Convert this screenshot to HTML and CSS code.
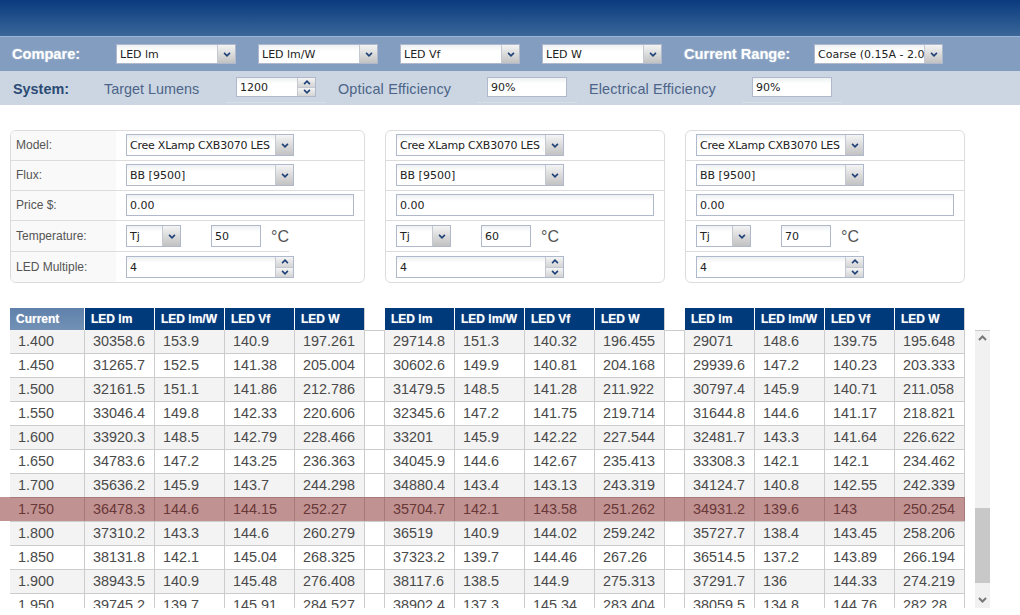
FILE: index.html
```html
<!DOCTYPE html>
<html lang="en">
<head>
<meta charset="utf-8">
<title>LED Compare</title>
<link rel="stylesheet" href="styles.css">
</head>
<body>
<svg class="defs" width="0" height="0" aria-hidden="true">
  <symbol id="down" viewBox="0 0 9 6"><path d="M1 1l3.5 3.5L8 1" fill="none" stroke="#1f4178" stroke-width="2"/></symbol>
  <symbol id="up" viewBox="0 0 9 6"><path d="M1 5l3.5-3.5L8 5" fill="none" stroke="#1f4178" stroke-width="2"/></symbol>
  <symbol id="sdown" viewBox="0 0 9 6"><path d="M1 1l3.5 3.5L8 1" fill="none" stroke="#777" stroke-width="2"/></symbol>
  <symbol id="sup" viewBox="0 0 9 6"><path d="M1 5l3.5-3.5L8 5" fill="none" stroke="#777" stroke-width="2"/></symbol>
</svg>

<header class="banner"></header>

<section class="compare">
  <span class="compare-label">Compare:</span>
  <div class="dd w120"><span class="dd-text">LED lm</span><span class="dd-btn"><svg class="chev"><use href="#down"/></svg></span></div>
  <div class="dd w120"><span class="dd-text">LED lm/W</span><span class="dd-btn"><svg class="chev"><use href="#down"/></svg></span></div>
  <div class="dd w120"><span class="dd-text">LED Vf</span><span class="dd-btn"><svg class="chev"><use href="#down"/></svg></span></div>
  <div class="dd w120"><span class="dd-text">LED W</span><span class="dd-btn"><svg class="chev"><use href="#down"/></svg></span></div>
  <span class="compare-label range">Current Range:</span>
  <div class="dd w129"><span class="dd-text">Coarse (0.15A - 2.0</span><span class="dd-btn"><svg class="chev"><use href="#down"/></svg></span></div>
</section>

<section class="system">
  <span class="system-title">System:</span>
  <span class="system-label l-target">Target Lumens</span>
  <div class="sys-cell"><div class="dd w80"><span class="dd-text">1200</span><span class="spin"><span><svg class="chev"><use href="#up"/></svg></span><span><svg class="chev"><use href="#down"/></svg></span></span></div></div>
  <span class="system-label l-optical">Optical Efficiency</span>
  <div class="sys-cell"><div class="dd w80"><span class="dd-text">90%</span></div></div>
  <span class="system-label l-electrical">Electrical Efficiency</span>
  <div class="sys-cell"><div class="dd w80"><span class="dd-text">90%</span></div></div>
</section>

<section class="panels">
  <div class="panel panel-main">
    <div class="row"><span class="lab">Model:</span><div class="val"><div class="dd tall w168"><span class="dd-text model">Cree XLamp CXB3070 LES</span><span class="dd-btn"><svg class="chev"><use href="#down"/></svg></span></div></div></div>
    <div class="row"><span class="lab">Flux:</span><div class="val"><div class="dd tall w168"><span class="dd-text">BB [9500]</span><span class="dd-btn"><svg class="chev"><use href="#down"/></svg></span></div></div></div>
    <div class="row"><span class="lab">Price $:</span><div class="val"><div class="dd tall w228"><span class="dd-text">0.00</span></div></div></div>
    <div class="row row-temp"><span class="lab">Temperature:</span><div class="val val-temp"><div class="dd tall w55"><span class="dd-text">Tj</span><span class="dd-btn"><svg class="chev"><use href="#down"/></svg></span></div><div class="dd tall w50 gap30"><span class="dd-text">50</span></div><span class="deg">°C</span></div></div>
    <div class="row row-last"><span class="lab">LED Multiple:</span><div class="val val-temp"><div class="dd tall w168"><span class="dd-text">4</span><span class="spin"><span><svg class="chev"><use href="#up"/></svg></span><span><svg class="chev"><use href="#down"/></svg></span></span></div></div></div>
  </div>
  <div class="panel panel-side">
    <div class="row"><div class="val"><div class="dd tall w168"><span class="dd-text model">Cree XLamp CXB3070 LES</span><span class="dd-btn"><svg class="chev"><use href="#down"/></svg></span></div></div></div>
    <div class="row"><div class="val"><div class="dd tall w168"><span class="dd-text">BB [9500]</span><span class="dd-btn"><svg class="chev"><use href="#down"/></svg></span></div></div></div>
    <div class="row"><div class="val"><div class="dd tall w258"><span class="dd-text">0.00</span></div></div></div>
    <div class="row row-temp"><div class="val val-temp"><div class="dd tall w55"><span class="dd-text">Tj</span><span class="dd-btn"><svg class="chev"><use href="#down"/></svg></span></div><div class="dd tall w50 gap30"><span class="dd-text">60</span></div><span class="deg">°C</span></div></div>
    <div class="row row-last"><div class="val val-temp"><div class="dd tall w168"><span class="dd-text">4</span><span class="spin"><span><svg class="chev"><use href="#up"/></svg></span><span><svg class="chev"><use href="#down"/></svg></span></span></div></div></div>
  </div>
  <div class="panel panel-side">
    <div class="row"><div class="val"><div class="dd tall w168"><span class="dd-text model">Cree XLamp CXB3070 LES</span><span class="dd-btn"><svg class="chev"><use href="#down"/></svg></span></div></div></div>
    <div class="row"><div class="val"><div class="dd tall w168"><span class="dd-text">BB [9500]</span><span class="dd-btn"><svg class="chev"><use href="#down"/></svg></span></div></div></div>
    <div class="row"><div class="val"><div class="dd tall w258"><span class="dd-text">0.00</span></div></div></div>
    <div class="row row-temp"><div class="val val-temp"><div class="dd tall w55"><span class="dd-text">Tj</span><span class="dd-btn"><svg class="chev"><use href="#down"/></svg></span></div><div class="dd tall w50 gap30"><span class="dd-text">70</span></div><span class="deg">°C</span></div></div>
    <div class="row row-last"><div class="val val-temp"><div class="dd tall w168"><span class="dd-text">4</span><span class="spin"><span><svg class="chev"><use href="#up"/></svg></span><span><svg class="chev"><use href="#down"/></svg></span></span></div></div></div>
  </div>
</section>

<section class="results">
  <table class="grid head">
    <colgroup><col class="c-cur"><col class="c"><col class="c"><col class="c"><col class="c"><col class="c-gap"><col class="c"><col class="c"><col class="c"><col class="c"><col class="c-gap"><col class="c"><col class="c"><col class="c"><col class="c"></colgroup>
    <tr>
      <th class="th-cur">Current</th><th>LED lm</th><th>LED lm/W</th><th>LED Vf</th><th class="th-end">LED W</th><th class="th-gap"></th>
      <th>LED lm</th><th>LED lm/W</th><th>LED Vf</th><th class="th-end">LED W</th><th class="th-gap"></th>
      <th>LED lm</th><th>LED lm/W</th><th>LED Vf</th><th class="th-end">LED W</th>
    </tr>
  </table>
  <div class="body-wrap">
    <div class="body-scroll">
      <table class="grid body">
        <colgroup><col class="c-cur"><col class="c"><col class="c"><col class="c"><col class="c"><col class="c-gap"><col class="c"><col class="c"><col class="c"><col class="c"><col class="c-gap"><col class="c"><col class="c"><col class="c"><col class="c"></colgroup>
        <tr><td>1.400</td><td>30358.6</td><td>153.9</td><td>140.9</td><td>197.261</td><td class="gap"></td><td>29714.8</td><td>151.3</td><td>140.32</td><td>196.455</td><td class="gap"></td><td>29071</td><td>148.6</td><td>139.75</td><td>195.648</td></tr>
        <tr><td>1.450</td><td>31265.7</td><td>152.5</td><td>141.38</td><td>205.004</td><td class="gap"></td><td>30602.6</td><td>149.9</td><td>140.81</td><td>204.168</td><td class="gap"></td><td>29939.6</td><td>147.2</td><td>140.23</td><td>203.333</td></tr>
        <tr><td>1.500</td><td>32161.5</td><td>151.1</td><td>141.86</td><td>212.786</td><td class="gap"></td><td>31479.5</td><td>148.5</td><td>141.28</td><td>211.922</td><td class="gap"></td><td>30797.4</td><td>145.9</td><td>140.71</td><td>211.058</td></tr>
        <tr><td>1.550</td><td>33046.4</td><td>149.8</td><td>142.33</td><td>220.606</td><td class="gap"></td><td>32345.6</td><td>147.2</td><td>141.75</td><td>219.714</td><td class="gap"></td><td>31644.8</td><td>144.6</td><td>141.17</td><td>218.821</td></tr>
        <tr><td>1.600</td><td>33920.3</td><td>148.5</td><td>142.79</td><td>228.466</td><td class="gap"></td><td>33201</td><td>145.9</td><td>142.22</td><td>227.544</td><td class="gap"></td><td>32481.7</td><td>143.3</td><td>141.64</td><td>226.622</td></tr>
        <tr><td>1.650</td><td>34783.6</td><td>147.2</td><td>143.25</td><td>236.363</td><td class="gap"></td><td>34045.9</td><td>144.6</td><td>142.67</td><td>235.413</td><td class="gap"></td><td>33308.3</td><td>142.1</td><td>142.1</td><td>234.462</td></tr>
        <tr><td>1.700</td><td>35636.2</td><td>145.9</td><td>143.7</td><td>244.298</td><td class="gap"></td><td>34880.4</td><td>143.4</td><td>143.13</td><td>243.319</td><td class="gap"></td><td>34124.7</td><td>140.8</td><td>142.55</td><td>242.339</td></tr>
        <tr><td>1.750</td><td>36478.3</td><td>144.6</td><td>144.15</td><td>252.27</td><td class="gap"></td><td>35704.7</td><td>142.1</td><td>143.58</td><td>251.262</td><td class="gap"></td><td>34931.2</td><td>139.6</td><td>143</td><td>250.254</td></tr>
        <tr><td>1.800</td><td>37310.2</td><td>143.3</td><td>144.6</td><td>260.279</td><td class="gap"></td><td>36519</td><td>140.9</td><td>144.02</td><td>259.242</td><td class="gap"></td><td>35727.7</td><td>138.4</td><td>143.45</td><td>258.206</td></tr>
        <tr><td>1.850</td><td>38131.8</td><td>142.1</td><td>145.04</td><td>268.325</td><td class="gap"></td><td>37323.2</td><td>139.7</td><td>144.46</td><td>267.26</td><td class="gap"></td><td>36514.5</td><td>137.2</td><td>143.89</td><td>266.194</td></tr>
        <tr><td>1.900</td><td>38943.5</td><td>140.9</td><td>145.48</td><td>276.408</td><td class="gap"></td><td>38117.6</td><td>138.5</td><td>144.9</td><td>275.313</td><td class="gap"></td><td>37291.7</td><td>136</td><td>144.33</td><td>274.219</td></tr>
        <tr><td>1.950</td><td>39745.2</td><td>139.7</td><td>145.91</td><td>284.527</td><td class="gap"></td><td>38902.4</td><td>137.3</td><td>145.34</td><td>283.404</td><td class="gap"></td><td>38059.5</td><td>134.8</td><td>144.76</td><td>282.28</td></tr>
      </table>
    </div>
    <div class="scrollbar">
      <svg class="sb-arrow"><use href="#sup"/></svg>
      <div class="sb-thumb"></div>
      <svg class="sb-arrow sb-down"><use href="#sdown"/></svg>
    </div>
  </div>
  <div class="highlight"></div>
</section>
</body>
</html>
```
FILE: styles.css
```css
* { box-sizing: border-box; }
html, body { margin: 0; padding: 0; background: #fff; overflow: hidden; }
body { width: 1020px; height: 615px; font-family: "Liberation Sans", Arial, sans-serif; color: #4a4a4a; }
.defs { position: absolute; }

.banner { height: 37px; background: linear-gradient(#0a3b7f, #3a6698); border-bottom: 1px solid #9bb8dc; }

.compare { height: 34px; background: #829dbf; display: flex; align-items: center; padding-left: 12px; gap: 22px; }
.compare-label { font-size: 14.6px; font-weight: bold; color: #fff; text-shadow: 0 0 2px rgba(255,255,255,.5); width: 82px; }
.compare-label.range { width: 108px; }

.system { height: 34px; background: #cbd6e2; display: flex; align-items: flex-start; padding-left: 13px; }
.system-title { width: 91px; font-size: 14.4px; font-weight: bold; color: #2c4a74; line-height: 36px; }
.system-label { font-size: 14.4px; color: #4d6488; line-height: 36px; }
.l-target { width: 122px; }
.l-optical { width: 139px; margin-left: 12px; letter-spacing: .17px; }
.l-electrical { width: 153px; margin-left: 12px; letter-spacing: .15px; }
.sys-cell { width: 100px; height: 32px; padding: 6px 10px 0; border-bottom: 1px solid #d8dee6; }

.dd { display: flex; height: 20px; border: 1px solid #b0b9cc; background: linear-gradient(#eef0f2, #fff 6px); font-family: "DejaVu Sans", sans-serif; font-size: 11px; color: #222; }
.dd.tall { height: 22px; }
.dd-text { flex: 1; min-width: 0; padding: 1px 0 0 3px; line-height: 18px; white-space: nowrap; overflow: hidden; }
.dd.tall .dd-text { line-height: 20px; }
.dd-text.model { letter-spacing: -0.23px; }
.dd-btn { width: 18px; flex: none; display: flex; align-items: center; justify-content: center; background: linear-gradient(#f4f4f4, #c2c2c2); border-left: 1px solid #c4c8d2; }
.chev { width: 8px; height: 5px; display: block; }
.spin { width: 18px; flex: none; display: flex; flex-direction: column; border-left: 1px solid #c4c8d2; }
.spin span { flex: 1; display: flex; align-items: center; justify-content: center; background: linear-gradient(#f4f4f4, #d4d4d4); }
.spin span + span { border-top: 1px solid #c4c8d2; }

.w50 { width: 50px; }
.w55 { width: 55px; }
.w80 { width: 80px; }
.w120 { width: 120px; }
.w129 { width: 129px; }
.w168 { width: 168px; }
.w228 { width: 228px; }
.w258 { width: 258px; }
.gap30 { margin-left: 30px; }

.panels { display: flex; gap: 20px; padding: 25px 0 0 10px; }
.panel { height: 153px; border: 1px solid #dcdcdc; border-radius: 6px; overflow: hidden; font-size: 12px; }
.panel-main { width: 355px; }
.panel-side { width: 280px; }
.row { display: flex; height: 30px; border-bottom: 1px solid #dcdcdc; }
.row-temp { height: 31px; }
.row-last { height: 31px; border-bottom: 0; }
.panel-main .row-temp { width: 278px; }
.panel-side .row-temp { width: 173px; }
.lab { width: 105px; flex: none; background: #f9f9f9; padding: 7px 0 0 5px; color: #555; }
.row-temp .lab, .row-last .lab { padding-top: 8px; }
.val { padding: 3px 0 0 10px; display: flex; }
.val-temp { padding-top: 4px; }
.deg { margin-left: 10px; font-size: 16px; line-height: 24px; color: #555; }

.results { position: relative; margin-top: 25px; padding-left: 10px; }
.grid { width: 955px; table-layout: fixed; border-collapse: separate; border-spacing: 0; }
.c-cur { width: 75px; }
.c { width: 70px; }
.c-gap { width: 20px; }
.head th { height: 22px; padding: 0 0 0 6px; text-align: left; font-size: 12px; font-weight: bold; color: #fff; background: #013a7a; border-right: 1px solid #fff; text-shadow: 0 0 1px rgba(255,255,255,.5); white-space: nowrap; overflow: hidden; }
.head .th-cur { background: linear-gradient(#5e81ab, #7391b5); }
.head .th-end { border-right-color: #ccc; }
.head .th-gap { background: #fff; border-right: 0; }

.body-wrap { display: flex; gap: 10px; height: 278px; }
.body-scroll { width: 955px; height: 278px; overflow: hidden; }
.body td { height: 24px; padding: 0 0 1px 8px; font-size: 14.4px; line-height: 16px; color: #4a4a4a; border-right: 1px solid #ccc; border-bottom: 1px solid #ccc; white-space: nowrap; overflow: hidden; }
.body tr:nth-child(odd) td { background: #f3f3f3; }
.body td.gap, .body tr:nth-child(odd) td.gap { background: #fff; }
.body tr:first-child td.gap { border-top: 1px solid #ccc; }

.scrollbar { width: 15px; height: 278px; background: #f1f1f1; border-top: 1px solid #ccc; display: flex; flex-direction: column; align-items: center; }
.sb-arrow { width: 9px; height: 6px; margin-top: 4px; flex: none; }
.sb-thumb { width: 15px; height: 75px; margin-top: 167px; background: #c8c8c8; flex: none; }
.sb-down { margin-top: auto; margin-bottom: 5px; }

.highlight { position: absolute; left: 0; top: 189px; width: 965px; height: 24px; background: rgba(131,38,38,.5); }
```
